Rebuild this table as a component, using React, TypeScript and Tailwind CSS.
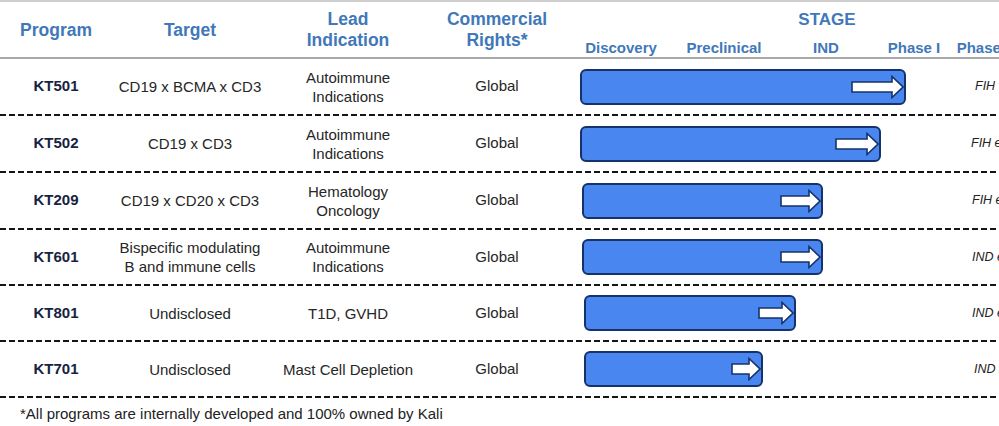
import React from "react";

type Row = {
  id: string;
  target: string[];
  lead: string[];
  rights: string;
  height: string;
  barPad: string;
  barWidth: string;
  arrow: number;
  note: string;
  notePad: string;
};

const rows: Row[] = [
  { id: "KT501", target: ["CD19 x BCMA x CD3"], lead: ["Autoimmune", "Indications"], rights: "Global", height: "h-[55px]", barPad: "pl-[14px]", barWidth: "w-[326px]", arrow: 53, note: "FIH  expected 2H 2025", notePad: "pl-[25px]" },
  { id: "KT502", target: ["CD19 x CD3"], lead: ["Autoimmune", "Indications"], rights: "Global", height: "h-[55px]", barPad: "pl-[14px]", barWidth: "w-[301px]", arrow: 44, note: "FIH expected 1H 2026", notePad: "pl-[21px]" },
  { id: "KT209", target: ["CD19 x CD20 x CD3"], lead: ["Hematology", "Oncology"], rights: "Global", height: "h-[55px]", barPad: "pl-[16px]", barWidth: "w-[241px]", arrow: 41, note: "FIH expected 1H 2026", notePad: "pl-[22px]" },
  { id: "KT601", target: ["Bispecific modulating", "B and immune cells"], lead: ["Autoimmune", "Indications"], rights: "Global", height: "h-[54px]", barPad: "pl-[16px]", barWidth: "w-[241px]", arrow: 41, note: "IND expected 2026", notePad: "pl-[22px]" },
  { id: "KT801", target: ["Undisclosed"], lead: ["T1D, GVHD"], rights: "Global", height: "h-[54px]", barPad: "pl-[18px]", barWidth: "w-[212px]", arrow: 36, note: "IND expected 2026", notePad: "pl-[22px]" },
  { id: "KT701", target: ["Undisclosed"], lead: ["Mast Cell Depletion"], rights: "Global", height: "h-[54px]", barPad: "pl-[18px]", barWidth: "w-[179px]", arrow: 30, note: "IND 2027", notePad: "pl-[24px]" },
];

const grid = "grid grid-cols-[112px_156px_160px_138px_384px_1fr]";

function Dashed() {
  return <div className="h-[2px] w-full bg-[linear-gradient(to_right,#141414_6px,transparent_6px)] bg-[length:9px_2px] bg-repeat-x" />;
}

function Arrow({ w }: { w: number }) {
  const h = 12;
  return (
    <svg width={w} height={24} viewBox={`0 0 ${w} 24`} className="block">
      <path
        d={`M1 7 H${w - h} V1.5 L${w - 1} 12 L${w - h} 22.5 V17 H1 Z`}
        fill="#ffffff"
        stroke="#15336b"
        strokeWidth={1.6}
        strokeLinejoin="miter"
      />
    </svg>
  );
}

function Lines({ lines }: { lines: string[] }) {
  return (
    <div className="flex flex-col items-center text-center leading-[19px]">
      {lines.map((l) => (
        <span key={l} className="whitespace-nowrap">{l}</span>
      ))}
    </div>
  );
}

export default function App() {
  return (
    <div className="relative h-[426px] w-[999px] overflow-hidden bg-white font-['Liberation_Sans',Arial,sans-serif] text-[#262626]">
      <div className="h-[2px] w-full bg-[#cfcfcf]" />

      {/* header */}
      <div className={`${grid} h-[55px] text-[17.5px] font-bold leading-[21px] text-[#4178b9]`}>
        <div className="flex items-center justify-center pt-[1px]">Program</div>
        <div className="flex items-center justify-center pt-[1px]">Target</div>
        <div className="flex flex-col items-center justify-center text-center">
          <span>Lead</span>
          <span>Indication</span>
        </div>
        <div className="flex flex-col items-center justify-center text-center">
          <span>Commercial</span>
          <span>Rights*</span>
        </div>
        <div className="col-span-2 flex flex-col pt-[8px]">
          <div className="w-[522px] text-center text-[17px] leading-[20px]">STAGE</div>
          <div className="mt-[9px] flex whitespace-nowrap text-[15px] leading-[18px]">
            <span className="w-[110px] shrink-0 text-center">Discovery</span>
            <span className="w-[96px] shrink-0 text-center">Preclinical</span>
            <span className="w-[108px] shrink-0 text-center">IND</span>
            <span className="w-[68px] shrink-0 text-center">Phase I</span>
            <span className="w-[74px] shrink-0 text-center">Phase II</span>
          </div>
        </div>
      </div>
      <div className="h-[2px] w-full bg-[#a9a9a9]" />

      {/* rows */}
      {rows.map((r) => (
        <div key={r.id}>
          <div className={`${grid} ${r.height} text-[15px]`}>
            <div className="flex items-center justify-center font-bold text-[#16233f]">{r.id}</div>
            <div className="flex items-center justify-center"><Lines lines={r.target} /></div>
            <div className="flex items-center justify-center"><Lines lines={r.lead} /></div>
            <div className="flex items-center justify-center">{r.rights}</div>
            <div className={`flex items-center ${r.barPad}`}>
              <div className={`flex h-[36px] items-center justify-end rounded-[6px] border-2 border-[#15336b] bg-[#4a86f0] ${r.barWidth}`}>
                <Arrow w={r.arrow} />
              </div>
            </div>
            <div className={`flex items-center whitespace-pre text-[12.5px] italic text-[#222] ${r.notePad}`}>{r.note}</div>
          </div>
          <Dashed />
        </div>
      ))}

      <div className="pl-[20px] pt-[7px] text-[15px] leading-[18px] text-[#222]">
        *All programs are internally developed and 100% owned by Kali
      </div>
    </div>
  );
}
